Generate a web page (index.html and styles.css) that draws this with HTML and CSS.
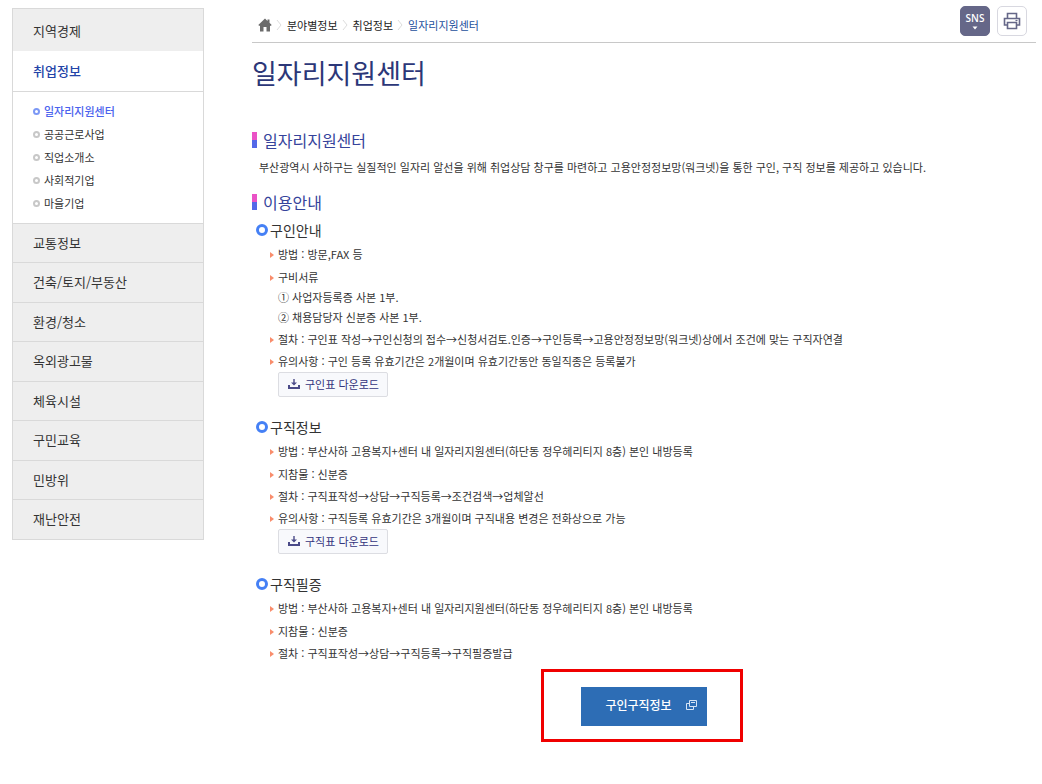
FILE: index.html
```html
<!DOCTYPE html>
<html lang="ko">
<head>
<meta charset="utf-8">
<meta name="viewport" content="width=device-width, initial-scale=1">
<title>일자리지원센터</title>
<link rel="stylesheet" href="styles.css">
</head>
<body>
<div class="page">
  <nav class="side" aria-label="분야별정보">
    <ul class="menu">
      <li class="menu-first"><a href="#">지역경제</a></li>
      <li class="menu-active"><a href="#">취업정보</a>
        <ul class="submenu">
          <li class="current"><a href="#">일자리지원센터</a></li>
          <li><a href="#">공공근로사업</a></li>
          <li><a href="#">직업소개소</a></li>
          <li><a href="#">사회적기업</a></li>
          <li><a href="#">마을기업</a></li>
        </ul>
      </li>
      <li><a href="#">교통정보</a></li>
      <li><a href="#">건축/토지/부동산</a></li>
      <li><a href="#">환경/청소</a></li>
      <li><a href="#">옥외광고물</a></li>
      <li><a href="#">체육시설</a></li>
      <li><a href="#">구민교육</a></li>
      <li><a href="#">민방위</a></li>
      <li><a href="#">재난안전</a></li>
    </ul>
  </nav>

  <main class="content">
    <div class="topbar">
      <nav class="crumbs" aria-label="현재 위치">
        <a href="#" class="home" aria-label="홈">
          <svg width="14" height="14" viewBox="0 0 14 14"><path fill="#6b6b6b" d="M7 0.5 0.3 7l1 1L2 7.500V13.500h3.500V9h3v4.500H12V7.500l.7.500 1-1-2.200-2.200V1.500h-2v1.400z"/></svg>
        </a>
        <svg class="sep" width="6" height="12" viewBox="0 0 6 12"><path d="M1 1l4 5-4 5"/></svg>
        <a href="#">분야별정보</a>
        <svg class="sep" width="6" height="12" viewBox="0 0 6 12"><path d="M1 1l4 5-4 5"/></svg>
        <a href="#">취업정보</a>
        <svg class="sep" width="6" height="12" viewBox="0 0 6 12"><path d="M1 1l4 5-4 5"/></svg>
        <a href="#" class="here">일자리지원센터</a>
      </nav>
      <div class="tools">
        <button type="button" class="tool sns">SNS
          <svg width="6" height="4" viewBox="0 0 6 4"><path fill="#fff" d="M0.500 0.500h5L3 3.500z"/></svg>
        </button>
        <button type="button" class="tool print" aria-label="인쇄">
          <svg width="18" height="18" viewBox="0 0 18 18" fill="none" stroke="#656788" stroke-width="1.600"><path d="M4.500 6V1.500h9V6M4.500 13H1.500V6.500h15V13h-3M4.500 10.500h9v6h-9z"/><path stroke-width="1.200" d="M12.500 8.500h2"/></svg>
        </button>
      </div>
    </div>

    <h1>일자리지원센터</h1>

    <h2>일자리지원센터</h2>
    <p class="intro">부산광역시 사하구는 실질적인 일자리 알선을 위해 취업상담 창구를 마련하고 고용안정정보망(워크넷)을 통한 구인, 구직 정보를 제공하고 있습니다.</p>

    <h2 class="guide">이용안내</h2>
    <section>
      <h3>구인안내</h3>
      <ul class="list">
        <li>방법 : 방문,FAX 등</li>
        <li>구비서류<br>① 사업자등록증 사본 1부.<br>② 채용담당자 신분증 사본 1부.</li>
        <li>절차 : 구인표 작성→구인신청의 접수→신청서검토.인증→구인등록→고용안정정보망(워크넷)상에서 조건에 맞는 구직자연결</li>
        <li>유의사항 : 구인 등록 유효기간은 2개월이며 유효기간동안 동일직종은 등록불가
          <a href="#" class="download"><svg width="12" height="10" viewBox="0 0 12 10"><path fill="none" stroke="#4a4a88" stroke-width="2" d="M1 6v3h10V6"/><path fill="#4a4a88" d="M5.300 0h1.400v3.500H9L6 6.500 3 3.500h2.300z"/></svg>구인표 다운로드</a>
        </li>
      </ul>
    </section>
    <section>
      <h3>구직정보</h3>
      <ul class="list">
        <li>방법 : 부산사하 고용복지+센터 내 일자리지원센터(하단동 정우헤리티지 8층) 본인 내방등록</li>
        <li>지참물 : 신분증</li>
        <li>절차 : 구직표작성→상담→구직등록→조건검색→업체알선</li>
        <li>유의사항 : 구직등록 유효기간은 3개월이며 구직내용 변경은 전화상으로 가능
          <a href="#" class="download"><svg width="12" height="10" viewBox="0 0 12 10"><path fill="none" stroke="#4a4a88" stroke-width="2" d="M1 6v3h10V6"/><path fill="#4a4a88" d="M5.300 0h1.400v3.500H9L6 6.500 3 3.500h2.300z"/></svg>구직표 다운로드</a>
        </li>
      </ul>
    </section>
    <section>
      <h3>구직필증</h3>
      <ul class="list">
        <li>방법 : 부산사하 고용복지+센터 내 일자리지원센터(하단동 정우헤리티지 8층) 본인 내방등록</li>
        <li>지참물 : 신분증</li>
        <li>절차 : 구직표작성→상담→구직등록→구직필증발급</li>
      </ul>
    </section>

    <div class="action">
      <a href="#" class="go">구인구직정보
        <svg width="11" height="10" viewBox="0 0 11 10" fill="none" stroke="#d5e4f5"><path d="M3.500.5h7v6h-7zM5 2.500h4M3.500 3.500h-3v6h7v-3"/></svg>
      </a>
    </div>
  </main>
</div>
</body>
</html>
```
FILE: styles.css
```css
*, *::before, *::after { box-sizing: border-box; }
body {
  margin: 0;
  background: #fff;
  color: #333;
  font: 11px/20px "Noto Sans CJK KR", sans-serif;
}
a { color: inherit; text-decoration: none; }
ul { margin: 0; padding: 0; list-style: none; }
h1, h2, h3, p { margin: 0; font-weight: 400; }

.page { display: flex; gap: 48px; padding: 8px 6px 32px 12px; }

/* side menu */
.side { flex: 0 0 192px; }
.menu { border: 1px solid #d9d9d9; font-size: 13px; }
.menu > li { border-top: 1px solid #d9d9d9; background: #eee; }
.menu > li > a { display: block; padding-left: 20px; line-height: 38px; }
.menu > li:nth-child(even) > a { padding-bottom: 1px; }
.menu > .menu-first, .menu > .menu-active { border-top: 0; }
.menu > .menu-first > a { padding: 3px 0 1px 20px; }
.menu > .menu-active { background: #fff; }
.menu > .menu-active > a {
  padding-top: 1px;
  border-bottom: 1px solid #d9d9d9;
  color: #2344a8;
  font-weight: 500;
}
.submenu { padding: 8px 0 8px 20px; font-size: 11px; line-height: 23px; }
.submenu a { display: flex; align-items: center; gap: 4px; }
.submenu a::before {
  content: "";
  width: 7px;
  height: 7px;
  border: 2px solid #c8c8c8;
  border-radius: 50%;
}
.submenu .current { color: #4a62ee; font-weight: 500; }
.submenu .current a::before { border-color: #7c98f5; }

/* top bar */
.content { flex: 1; min-width: 0; }
.topbar {
  display: flex;
  justify-content: space-between;
  align-items: flex-start;
  height: 35px;
  padding-right: 9px;
  border-bottom: 1px solid #c8c8c8;
}
.crumbs { display: flex; align-items: center; height: 34px; padding-left: 6px; color: #222; }
.crumbs a { margin-right: 4px; }
.sep { margin-right: 5px; fill: none; stroke: #ddd; }
.home { display: flex; }
.crumbs .here { color: #1c4f9c; }
.tools { display: flex; gap: 7px; margin-top: -2px; }
.tool {
  display: flex;
  flex-direction: column;
  align-items: center;
  justify-content: center;
  width: 30px;
  height: 30px;
  padding: 0;
  border: 1px solid #d8d8e0;
  border-radius: 5px;
  background: #fff;
}
.sns {
  gap: 2px;
  border-color: #656788;
  background: #656788;
  color: #fff;
  font: 600 10px/12px "Open Sans", sans-serif;
}

/* headings */
h1 { margin-top: 10px; color: #2c3778; font-size: 27px; line-height: 40px; }
h2 {
  display: flex;
  align-items: center;
  gap: 6px;
  margin-top: 35px;
  color: #35439b;
  font-size: 16px;
  line-height: 24px;
}
h2::before {
  content: "";
  width: 5px;
  height: 16px;
  background: linear-gradient(#ea52c6 50%, #5468e8 50%);
}
.guide { margin-top: 13px; }
.intro { margin-top: 5px; padding-left: 7px; }
h3 {
  display: flex;
  align-items: center;
  gap: 2px;
  padding-left: 4px;
  font-size: 14px;
  line-height: 22px;
}
h3::before {
  content: "";
  width: 12px;
  height: 12px;
  border: 3px solid #4580f5;
  border-radius: 50%;
}
section { margin-top: 19px; }
.guide + section { margin-top: 5px; }

/* item lists */
.list { margin-top: 3px; padding-left: 18px; }
.list li { position: relative; padding-left: 8px; }
.list li + li { margin-top: 2px; }
.list li:nth-child(2) { margin-top: 3px; }
.list li::before {
  content: "";
  position: absolute;
  top: 8px;
  left: 0;
  border: solid transparent;
  border-width: 3px 0 3px 4px;
  border-left-color: #f98d6c;
}
.download {
  display: flex;
  align-items: center;
  gap: 5px;
  width: fit-content;
  height: 25px;
  margin-top: 1px;
  padding: 0 8px 1px 9px;
  border: 1px solid #dcdde2;
  border-radius: 2px;
  background: #f8f9fc;
  color: #34347c;
}

/* link button with highlight frame */
.action { display: flex; justify-content: center; margin-top: 24px; }
.go {
  position: relative;
  display: flex;
  align-items: center;
  gap: 14px;
  height: 39px;
  padding: 0 10px 3px 24px;
  background: #2d6db5;
  color: #fff;
  font-size: 12px;
  font-weight: 500;
}
.go::after {
  content: "";
  position: absolute;
  inset: -18px -36px -16px -40px;
  border: 3px solid #f00000;
}
```
